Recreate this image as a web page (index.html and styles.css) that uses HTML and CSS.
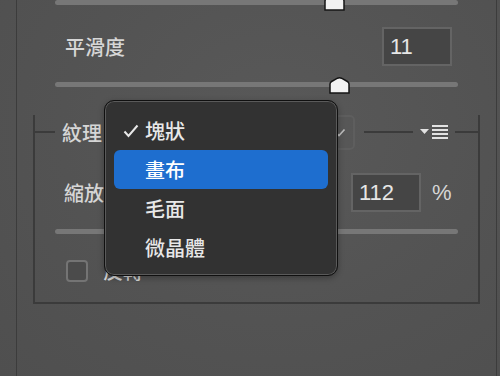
FILE: index.html
```html
<!DOCTYPE html>
<html>
<head>
<meta charset="utf-8">
<link rel="stylesheet" href="styles.css">
</head>
<body>
<div class="panel">
  <div class="track track-top">
    <svg class="thumb thumb-top" width="21" height="17" viewBox="0 0 21 17"><path d="M1 16 V7 Q1 5.5 2.6 4.5 L8.5 1.2 Q10.5 0.3 12.5 1.2 L18.4 4.5 Q20 5.5 20 7 V16 Z" fill="#f2f2f2" stroke="#161616" stroke-width="1.5"/></svg>
  </div>
  <div class="row row-smooth">
    <span class="label">平滑度</span>
    <div class="num num-smooth">11</div>
  </div>
  <div class="track track-2">
    <svg class="thumb thumb-2" width="21" height="17" viewBox="0 0 21 17"><path d="M1 16 V7 Q1 5.5 2.6 4.5 L8.5 1.2 Q10.5 0.3 12.5 1.2 L18.4 4.5 Q20 5.5 20 7 V16 Z" fill="#f2f2f2" stroke="#161616" stroke-width="1.5"/></svg>
  </div>

  <div class="group">
    <div class="group-head">
      <span class="hline hl-1"></span>
      <span class="label legend">紋理</span>
      <div class="select">
        <svg class="chev" width="12" height="9" viewBox="0 0 12 9"><polyline points="1.5,4 5,7.5 10.5,1.5" fill="none" stroke="#bdbdbd" stroke-width="1.6"/></svg>
      </div>
      <span class="hline hl-2"></span>
      <svg class="menu-icon" width="30" height="16" viewBox="0 0 30 16"><polygon points="0,4 9,4 4.5,9" fill="#e2e2e2"/><rect x="12" y="0" width="16" height="2" fill="#e2e2e2"/><rect x="12" y="4" width="16" height="2" fill="#e2e2e2"/><rect x="12" y="8" width="16" height="2" fill="#e2e2e2"/><rect x="12" y="12" width="16" height="2" fill="#e2e2e2"/></svg>
      <span class="hline hl-3"></span>
    </div>
    <div class="row row-scale">
      <span class="label">縮放</span>
      <div class="num num-scale">112</div>
      <span class="label pct">%</span>
    </div>
    <div class="track track-3"></div>
    <div class="row row-check">
      <span class="checkbox"></span>
      <span class="label check-label">反轉</span>
    </div>
  </div>
</div>

<div class="menu">
  <div class="item"><svg class="check" width="16" height="14" viewBox="0 0 16 14"><polyline points="1.5,7.5 5.5,12 14.5,1.5" fill="none" stroke="#e8e8e8" stroke-width="2"/></svg>塊狀</div>
  <div class="item active">畫布</div>
  <div class="item">毛面</div>
  <div class="item">微晶體</div>
</div>
</body>
</html>
```

FILE: styles.css
```css
html, body {
  margin: 0;
  padding: 0;
}
body {
  width: 500px;
  height: 376px;
  overflow: hidden;
  background: #535353;
  background: radial-gradient(ellipse at 55% 35%, #595959 0%, #535353 55%, #4f4f4f 100%);
  font-family: "Noto Sans CJK TC", "Liberation Sans", sans-serif;
  position: relative;
}
.panel {
  margin-left: 16px;
  width: 479px;
  height: 376px;
  border-left: 1px solid #3c3c3c;
  border-right: 1px solid #3c3c3c;
  box-sizing: content-box;
}
.track {
  position: relative;
  margin-left: 38px;
  width: 403px;
  height: 5px;
  border-radius: 3px;
  background: #777777;
}
.track-top {
  margin-top: 0;
}
.thumb {
  position: absolute;
  display: block;
}
.thumb-top {
  left: 269px;
  top: -6px;
}
.thumb-2 {
  left: 274px;
  top: -5px;
}
.row {
  display: flex;
  align-items: center;
}
.label {
  font-size: 20px;
  line-height: 24px;
  font-weight: 500;
  color: #d6d6d6;
}
.row-smooth {
  margin-top: 22px;
  padding-left: 48px;
  height: 39px;
}
.num {
  box-sizing: border-box;
  width: 70px;
  height: 39px;
  border: 2px solid #646464;
  background: #454545;
  color: #e6e6e6;
  font-family: "Liberation Sans", Arial, sans-serif;
  font-size: 22px;
  line-height: 35px;
  padding-left: 6px;
}
.num-smooth {
  margin-left: 257px;
}
.track-2 {
  margin-top: 16px;
}
.group {
  margin-top: 45px;
  margin-left: 16px;
  width: 443px;
  border: 2px solid #3b3b3b;
  border-top: none;
  padding-bottom: 20px;
}
.group-head {
  display: flex;
  align-items: center;
  height: 35px;
  margin: -17px -2px 0 -2px;
}
.hline {
  height: 2px;
  background: #3b3b3b;
  margin-top: -1px;
}
.hl-1 {
  width: 22px;
}
.legend {
  margin-left: 7px;
}
.select {
  box-sizing: border-box;
  margin-left: 6px;
  width: 247px;
  height: 35px;
  border: 2px solid #5e5e5e;
  border-radius: 5px;
  display: flex;
  align-items: center;
  justify-content: flex-end;
  padding-right: 7px;
}
.chev {
  display: block;
}
.hl-2 {
  margin-left: 9px;
  width: 49px;
}
.menu-icon {
  display: block;
  margin-left: 7px;
  margin-top: 0px;
}
.hl-3 {
  margin-left: 5px;
  width: 24px;
}
.row-scale {
  margin-top: 23px;
  padding-left: 29px;
  height: 39px;
}
.num-scale {
  margin-left: 247px;
}
.pct {
  margin-left: 11px;
  font-family: "Liberation Sans", Arial, sans-serif;
  font-size: 22px;
  font-weight: 400;
}
.track-3 {
  margin-top: 17px;
  margin-left: 20px;
}
.row-check {
  margin-top: 26px;
  padding-left: 31px;
  height: 22px;
}
.checkbox {
  box-sizing: border-box;
  width: 22px;
  height: 22px;
  border: 2px solid #747474;
  border-radius: 4px;
  background: #4b4b4b;
}
.check-label {
  margin-left: 15px;
}
.menu {
  position: absolute;
  left: 104px;
  top: 100px;
  box-sizing: border-box;
  width: 234px;
  height: 176px;
  border: 1px solid #101010;
  border-radius: 10px;
  box-shadow: inset 0 0 0 1px #5a5a5a, 0 2px 6px rgba(0,0,0,0.3);
  background: #323232;
  padding: 10px 9px 0 9px;
}
.item {
  position: relative;
  height: 39px;
  border-radius: 6px;
  padding-left: 31px;
  font-size: 20px;
  line-height: 39px;
  font-weight: 500;
  color: #e8e8e8;
}
.item.active {
  background: #1e6ecf;
  color: #ffffff;
}
.check {
  position: absolute;
  left: 9px;
  top: 13px;
}
```
